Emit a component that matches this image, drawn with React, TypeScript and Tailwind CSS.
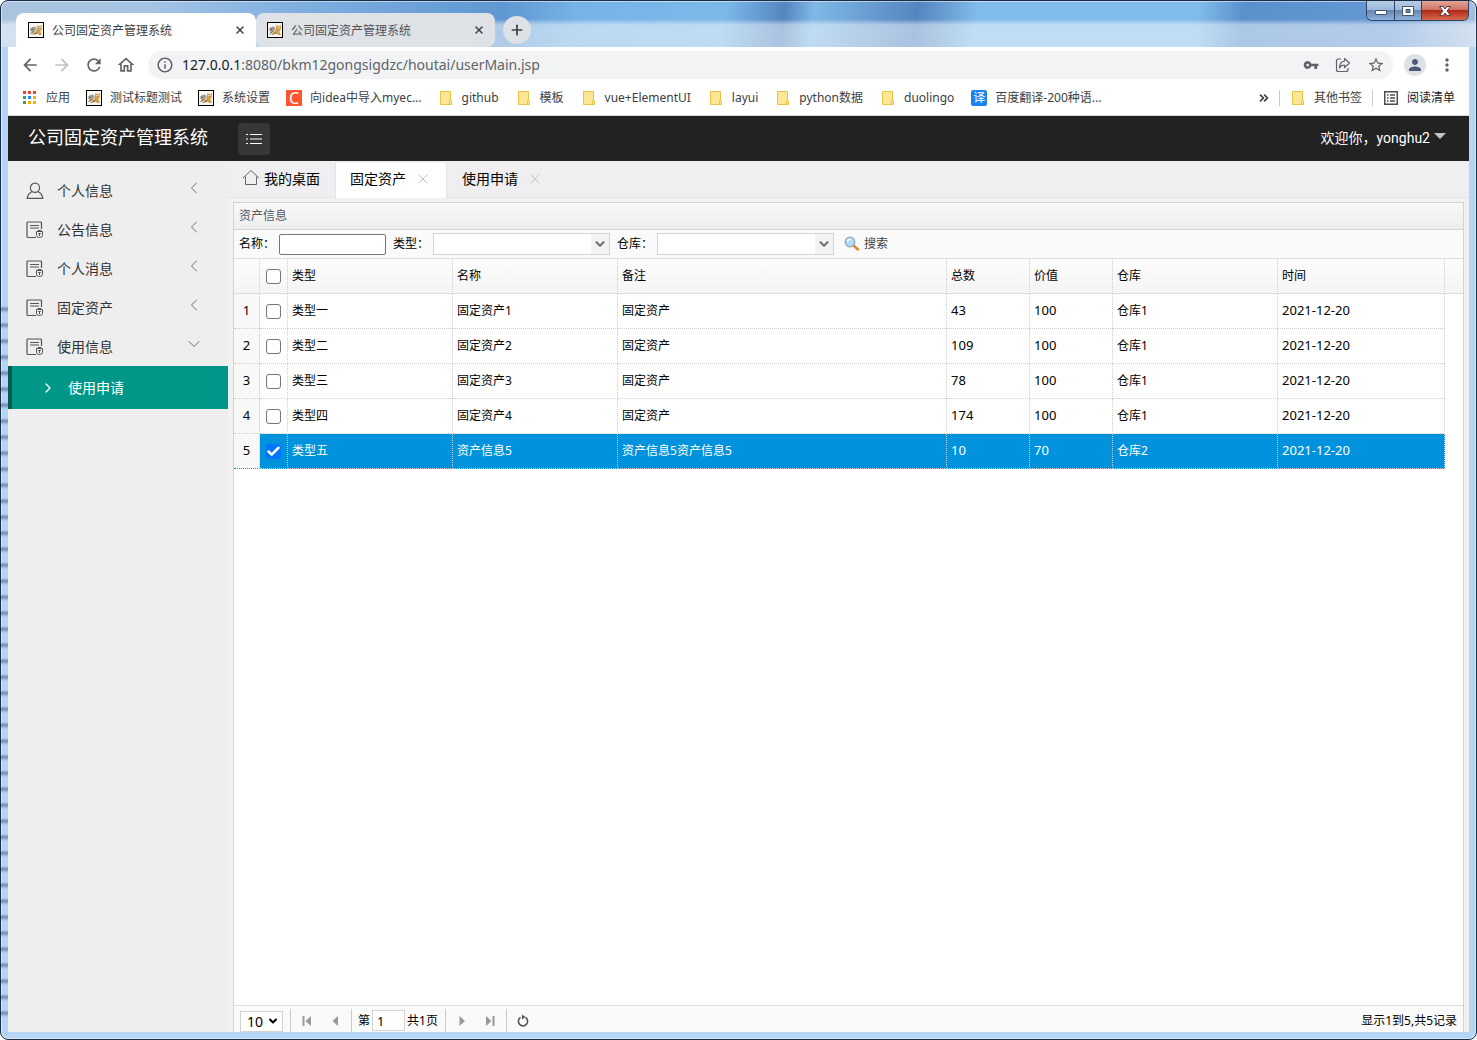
import type { ReactNode } from "react";
import { clsx } from "clsx";
import { Check, ChevronDown, ChevronLeft, ChevronRight, ChevronsRight, Plus, X } from "lucide-react";
import { MdArrowBack, MdArrowForward, MdInfoOutline, MdMoreVert, MdOutlineHome, MdPerson, MdRefresh, MdStarBorder, MdVpnKey } from "react-icons/md";

const TITLE = "公司固定资产管理系统";

const BOOKMARKS = [
  { label: "应用", icon: "apps" },
  { label: "测试标题测试", icon: "cat" },
  { label: "系统设置", icon: "cat" },
  { label: "向idea中导入myec...", icon: "c" },
  { label: "github", icon: "folder" },
  { label: "模板", icon: "folder" },
  { label: "vue+ElementUI", icon: "folder" },
  { label: "layui", icon: "folder" },
  { label: "python数据", icon: "folder" },
  { label: "duolingo", icon: "folder" },
  { label: "百度翻译-200种语...", icon: "fanyi" },
];

const MENU = [
  { label: "个人信息", user: true },
  { label: "公告信息" },
  { label: "个人消息" },
  { label: "固定资产" },
  { label: "使用信息", open: true },
];

const ASSETS = [
  { type: "类型一", name: "固定资产1", remark: "固定资产", total: 43, price: 100, store: "仓库1", date: "2021-12-20" },
  { type: "类型二", name: "固定资产2", remark: "固定资产", total: 109, price: 100, store: "仓库1", date: "2021-12-20" },
  { type: "类型三", name: "固定资产3", remark: "固定资产", total: 78, price: 100, store: "仓库1", date: "2021-12-20" },
  { type: "类型四", name: "固定资产4", remark: "固定资产", total: 174, price: 100, store: "仓库1", date: "2021-12-20" },
  { type: "类型五", name: "资产信息5", remark: "资产信息5资产信息5", total: 10, price: 70, store: "仓库2", date: "2021-12-20", selected: true },
];

function CatIcon() {
  return (
    <svg viewBox="0 0 16 16" className="size-4 shrink-0">
      <rect x=".5" y=".5" width="15" height="15" fill="#f7f6f2" stroke="#000" />
      <path d="M4 13 6 10.500 8.500 8 9 5 9.500 3l1.500 1h1.500L14 3v4l-1.500 2 .5 2 1 2h-3l-1-1.500-3 .5-1 1z" fill="#cfa04e" />
      <path d="M2 6.500 4.500 5 7 4.500 8.500 6.500 6.500 9 3.500 12 2 12.500 3.500 9.500z" fill="#9b9a90" />
      <path d="M2.500 8.500 5 7M4 11l2.500-2M6.500 12l3-1" stroke="#5d5546" strokeWidth=".8" fill="none" />
      <path d="M10.500 5.500h.8M12.400 5.500h.8" stroke="#fff" />
    </svg>
  );
}

function FolderIcon() {
  return (
    <svg viewBox="0 0 16 16" className="size-4 shrink-0">
      <path d="M2.500 1.500h10v9l1 .500v3.500h-11z" fill="#ffe694" stroke="#e8c445" />
      <path d="M11.500 14v-3l1-1" fill="none" stroke="#e8c445" />
    </svg>
  );
}

function BookmarkIcon({ kind }: { kind: string }) {
  if (kind === "cat") return <CatIcon />;
  if (kind === "folder") return <FolderIcon />;
  if (kind === "apps") {
    const colors = ["#ea4335", "#ea4335", "#ea4335", "#34a853", "#1a8cff", "#fbae05", "#34a853", "#fbae05", "#fbae05"];
    return (
      <svg viewBox="0 0 16 16" className="size-4 shrink-0">
        {colors.map((c, i) => (
          <rect key={i} x={1 + (i % 3) * 5} y={1 + Math.floor(i / 3) * 5} width="3" height="3" fill={c} />
        ))}
      </svg>
    );
  }
  if (kind === "c") {
    return <span className="flex size-4 items-center justify-center bg-[#fc5531] text-base leading-4 text-white">C</span>;
  }
  return <span className="flex size-4 items-center justify-center rounded-xs bg-[#1b82f1] text-xs leading-4 text-white">译</span>;
}

function BrowserTab({ active }: { active?: boolean }) {
  return (
    <div
      className={clsx(
        "flex h-[34px] items-center pr-2",
        active ? "w-60 rounded-t-lg bg-white pl-3 text-[#3c4043]" : "w-[239px] rounded-lg bg-[#dee1e6] pl-[11px] text-[#50545a]"
      )}
    >
      <CatIcon />
      <span className="ml-2 flex-1 pt-px text-xs">{TITLE}</span>
      <button aria-label="关闭标签页" className="flex size-4 items-center justify-center">
        <X className="size-3 text-[#3c4043]" strokeWidth={3} />
      </button>
    </div>
  );
}

function WindowButtons() {
  return (
    <div className="flex h-5 overflow-hidden rounded-b-md border border-t-0 border-[#2c4363] text-white">
      <button aria-label="最小化" className="flex w-7 items-center justify-center border-r border-[#2c4363] bg-[linear-gradient(#b9cfe8,#9db8d9_45%,#6787b2_50%,#8cb0dc)]">
        <svg viewBox="0 0 14 12" className="h-3 w-3.5">
          <rect x="1.500" y="5.500" width="11" height="4" rx=".5" fill="#fff" stroke="#44546d" />
        </svg>
      </button>
      <button aria-label="最大化" className="flex w-[27px] items-center justify-center border-r border-[#2c4363] bg-[linear-gradient(#b9cfe8,#9db8d9_45%,#6787b2_50%,#8cb0dc)]">
        <svg viewBox="0 0 14 12" className="h-3 w-3.5">
          <path fillRule="evenodd" d="M1.500 1.500h11v9h-11zM5 4.500h4v3H5z" fill="#fff" stroke="#44546d" />
        </svg>
      </button>
      <button aria-label="关闭" className="flex w-[46px] items-center justify-center bg-[linear-gradient(#e4a597,#cf7465_45%,#b02a17_50%,#d8694e)]">
        <svg viewBox="0 0 14 12" className="h-3 w-3.5">
          <path d="M1.500 1.500H5L7 4l2-2.500h3.500L9 6l3.500 4.500H9L7 8l-2 2.500H1.500L5 6z" fill="#fff" stroke="#5a3a40" />
        </svg>
      </button>
    </div>
  );
}

function ShareIcon() {
  return (
    <svg viewBox="0 0 16 16" className="size-4 text-[#5f6368]" fill="none" stroke="currentColor" strokeWidth="1.200" strokeLinejoin="round">
      <path d="M6 2H3.500A2 2 0 0 0 1.500 4v8.500a2 2 0 0 0 2 2H11a2 2 0 0 0 2-2V11" />
      <path d="M9.500 1.500 14.500 6l-5 4.500V8C7 8 5.500 9 4.500 11 4.500 7 6.500 4.500 9.500 4z" />
    </svg>
  );
}

function BrowserChrome() {
  return (
    <header className="text-[#3c4043]">
      <div className="flex h-[46px] items-end pl-2">
        <BrowserTab active />
        <BrowserTab />
        <button aria-label="新标签页" className="mb-[3px] ml-2 flex size-7 items-center justify-center rounded-full bg-[#dee1e6]">
          <Plus className="size-4" strokeWidth={2.5} />
        </button>
        <div className="ml-auto self-start">
          <WindowButtons />
        </div>
      </div>

      <div className="flex h-9 items-center bg-white px-3 text-[#5f6368]">
        <button aria-label="后退"><MdArrowBack className="size-5" /></button>
        <button aria-label="前进" className="ml-3 text-[#bdc1c6]"><MdArrowForward className="size-5" /></button>
        <button aria-label="刷新" className="ml-3"><MdRefresh className="size-5" /></button>
        <button aria-label="主页" className="ml-3"><MdOutlineHome className="size-5" /></button>
        <div className="ml-3 flex h-7 flex-1 items-center rounded-full bg-[#f1f3f4] px-2">
          <MdInfoOutline className="size-[18px]" />
          <a href="#url" className="ml-2 flex-1 text-sm">
            <span className="text-[#202124]">127.0.0.1</span>:8080/bkm12gongsigdzc/houtai/userMain.jsp
          </a>
          <button aria-label="密码"><MdVpnKey className="size-4" /></button>
          <button aria-label="分享" className="ml-4"><ShareIcon /></button>
          <button aria-label="收藏" className="ml-4"><MdStarBorder className="size-[18px]" /></button>
        </div>
        <button aria-label="用户" className="ml-[11px] flex size-[22px] items-center justify-center rounded-full bg-[#dee1e6]">
          <MdPerson className="size-[18px] text-[#4c5a73]" />
        </button>
        <button aria-label="菜单" className="ml-[11px]"><MdMoreVert className="size-5" /></button>
      </div>

      <nav className="flex h-[33px] items-center border-b border-[#d5d7da] bg-white pr-3.5 pb-[3px] pl-[14px] text-xs whitespace-nowrap">
        {BOOKMARKS.map((b) => (
          <a key={b.label} href="#bookmark" className={clsx("flex items-center gap-2", b.icon === "folder" ? "mr-[17px]" : "mr-4")}>
            <BookmarkIcon kind={b.icon} />
            {b.label}
          </a>
        ))}
        <ChevronsRight className="mr-2 ml-auto size-3.5" strokeWidth={3} />
        <a href="#others" className="flex items-center gap-2 border-l border-[#c8cace] pl-2.5">
          <FolderIcon />
          其他书签
        </a>
        <a href="#reading" className="ml-2.5 flex items-center gap-2 border-l border-[#c8cace] pl-2.5 text-[#202124]">
          <svg viewBox="0 0 16 16" className="size-4" fill="none" stroke="#4a4d51" strokeWidth="1.500">
            <path d="M1.750 1.750h12.500v12.500H1.750zM4 5h1.500M7 5h5M4 8h1.500M7 8h5M4 11h1.500M7 11h5" />
          </svg>
          阅读清单
        </a>
      </nav>
    </header>
  );
}

function MenuIcon({ user }: { user?: boolean }) {
  return (
    <svg viewBox="0 0 18 18" className="size-[18px]" fill="none" stroke="#555" strokeWidth="1.200">
      {user ? (
        <>
          <circle cx="9" cy="5.800" r="4.600" />
          <path d="M6 9.500C3.500 10.800 1.500 13 1.200 16.400h15.600C16.500 13 14.500 10.800 12 9.500" />
        </>
      ) : (
        <>
          <path d="M15.500 8V2a1 1 0 0 0-1-1H2a1 1 0 0 0-1 1v13.500a1 1 0 0 0 1 1h8M4 4.500h9M4 7h9" />
          <path d="M10.500 10.500h6v3.800a2 2 0 0 1-2 2h-2a2 2 0 0 1-2-2zM12 10.500V9.500h3v1M12.200 12.500h2.600M13.500 12.500v2.500" strokeWidth="1" />
        </>
      )}
    </svg>
  );
}

function Sidebar() {
  return (
    <aside className="w-[220px] shrink-0 bg-[#eee] pt-2.5 text-sm text-[#333]">
      {MENU.map((m) => (
        <a key={m.label} href="#menu" className="flex h-[39px] items-center pr-6 pl-[18px]">
          <MenuIcon user={m.user} />
          <span className="ml-[13px] flex-1">{m.label}</span>
          {m.open ? (
            <ChevronDown className="mb-1.5 size-5 text-[#555]" strokeWidth={1} />
          ) : (
            <ChevronLeft className="mb-1.5 size-5 text-[#555]" strokeWidth={1} />
          )}
        </a>
      ))}
      <a href="#apply" className="flex h-[43px] items-center border-l-4 border-[#075b50] bg-[#009688] pl-7 text-white">
        <ChevronRight className="size-4" strokeWidth={2} />
        <span className="ml-3">使用申请</span>
      </a>
    </aside>
  );
}

function PageTabs() {
  return (
    <nav className="flex h-[37px] shrink-0 items-stretch border-b border-[#e4e4e6] bg-[#efeef0] pt-0.5 text-sm text-black">
      <a href="#desk" className="flex w-[107px] items-center pb-0.5 pl-3.5">
        <svg viewBox="0 0 18 18" className="mb-0.5 size-[18px]" fill="none" stroke="#666">
          <path d="M1 9 9 1.500 17 9M3.500 7.500v8h11v-8" />
        </svg>
        <span className="ml-1">我的桌面</span>
      </a>
      <a href="#assets" className="-mb-px flex items-center border-x border-[#e4e4e6] bg-white pr-[15px] pb-[3px] pl-3.5">
        固定资产
        <X className="ml-[9px] size-4 text-[#c2c2c2]" strokeWidth={1.5} />
      </a>
      <a href="#apply-tab" className="flex items-center px-[15px] pb-0.5">
        使用申请
        <X className="ml-[9px] size-4 text-[#c2c2c2]" strokeWidth={1.5} />
      </a>
    </nav>
  );
}

function ComboBox({ label, id }: { label: string; id: string }) {
  return (
    <>
      <label htmlFor={id}>{label}</label>
      <span className="relative ml-1 h-[22px] w-[177px]">
        <select id={id} className="h-full w-full appearance-none border border-[#d3d3d3] bg-white">
          <option value=""></option>
        </select>
        <span className="pointer-events-none absolute top-px right-px flex h-5 w-[18px] items-center justify-center bg-[#f3f3f3]">
          <ChevronDown className="size-3.5 text-[#777]" strokeWidth={4} />
        </span>
      </span>
    </>
  );
}

function Tick({ checked, label }: { checked?: boolean; label: string }) {
  return (
    <span className="relative mx-auto block size-[15px]">
      <input
        type="checkbox"
        aria-label={label}
        defaultChecked={checked}
        className="peer block size-[15px] appearance-none rounded-[3px] border border-[#767676] bg-white checked:border-[#0075ff] checked:bg-[#0075ff]"
      />
      <Check className="pointer-events-none absolute inset-0 hidden size-[15px] text-white peer-checked:block" strokeWidth={4} />
    </span>
  );
}

function Cell({ children, selected, className }: { children: ReactNode; selected?: boolean; className?: string }) {
  return (
    <td
      className={clsx(
        "border-r border-b border-dotted border-[#ccc] px-1",
        selected && "bg-[#0092dc] text-white",
        className
      )}
    >
      {children}
    </td>
  );
}

function AssetTable() {
  return (
    <table className="w-full table-fixed border-separate border-spacing-0 text-left">
      <colgroup>
        <col className="w-[26px]" />
        <col className="w-[28px]" />
        <col className="w-[13.43%]" />
        <col className="w-[13.43%]" />
        <col className="w-[26.77%]" />
        <col className="w-[6.75%]" />
        <col className="w-[6.75%]" />
        <col className="w-[13.43%]" />
        <col className="w-[13.59%]" />
        <col />
      </colgroup>
      <thead>
        <tr className="h-[35px] bg-[linear-gradient(#fdfdfd,#f4f4f4)]">
          <th className="border-r border-b border-r-[#ccc] border-b-[#ddd] [border-right-style:dotted]" />
          <th className="border-r border-b border-r-[#ccc] border-b-[#ddd] [border-right-style:dotted]">
            <Tick label="全选" />
          </th>
          {["类型", "名称", "备注", "总数", "价值", "仓库", "时间"].map((h) => (
            <th key={h} className="border-r border-b border-r-[#ccc] border-b-[#ddd] px-1 font-normal [border-right-style:dotted]">
              {h}
            </th>
          ))}
          <th className="border-b border-[#ddd]" />
        </tr>
      </thead>
      <tbody>
        {ASSETS.map((a, i) => (
          <tr key={a.type} className="h-[35px]">
            <td
              className={clsx(
                "border-r border-b border-dotted border-[#ccc] bg-[#f8f8f8] text-center text-[13px]",
                a.selected && "border-b-[#0092dc]"
              )}
            >
              {i + 1}
            </td>
            <td className={clsx("border-r border-b border-dotted border-[#ccc]", a.selected && "bg-[#0092dc]")}>
              <Tick label={a.name} checked={a.selected} />
            </td>
            <Cell selected={a.selected}>{a.type}</Cell>
            <Cell selected={a.selected}>{a.name}</Cell>
            <Cell selected={a.selected}>{a.remark}</Cell>
            <Cell selected={a.selected} className="text-[13px]">{a.total}</Cell>
            <Cell selected={a.selected} className="text-[13px]">{a.price}</Cell>
            <Cell selected={a.selected}>{a.store}</Cell>
            <Cell selected={a.selected} className="text-[13px]">{a.date}</Cell>
            <td />
          </tr>
        ))}
      </tbody>
    </table>
  );
}

function PageButton({ label, d }: { label: string; d: string }) {
  return (
    <button aria-label={label} className="flex w-7 items-center justify-center">
      <svg viewBox="0 0 12 12" className="size-3" fill="#999">
        <path d={d} />
      </svg>
    </button>
  );
}

function Pagination() {
  return (
    <footer className="flex h-[27px] shrink-0 items-stretch border-t border-[#ddd] bg-[#fafafa] pt-[3px] pl-1.5">
      <div className="relative mt-0.5 h-[21px] w-[43px] self-start">
        <select aria-label="每页条数" className="h-full w-full appearance-none border border-[#d3d3d3] bg-white pl-1.5 text-sm leading-4">
          <option>10</option>
        </select>
        <ChevronDown className="pointer-events-none absolute top-1 right-1 size-3 text-black" strokeWidth={4} />
      </div>
      <div className="ml-[7px] flex border-l border-[#ccc] px-0.5">
        <PageButton label="首页" d="M1.500 1h2v10h-2zM10 1v10L4.500 6z" />
        <PageButton label="上一页" d="M9 1v10L3.500 6z" />
      </div>
      <div className="flex items-center border-x border-[#ccc] pr-[7px] pl-1.5">
        <label htmlFor="page">第</label>
        <input id="page" defaultValue="1" className="mx-0.5 h-[21px] w-[33px] border border-[#d3d3d3] bg-white px-1 text-[13px]" />
        共1页
      </div>
      <div className="flex border-r border-[#ccc] px-0.5">
        <PageButton label="下一页" d="M3.500 1v10L9 6z" />
        <PageButton label="末页" d="M2 1v10L7.500 6zM8.500 1h2v10h-2z" />
      </div>
      <button aria-label="刷新列表" className="ml-[9px]">
        <svg viewBox="0 0 14 14" className="size-3.5" fill="none" stroke="#555" strokeWidth="1.600">
          <path d="M4.500 3.400A4.600 4.600 0 1 0 9.500 3.400" />
          <path d="M6 .5 9.500 3 6 5.500z" fill="#555" stroke="none" />
        </svg>
      </button>
      <p className="ml-auto self-center pr-1.5">显示1到5,共5记录</p>
    </footer>
  );
}

export default function App() {
  return (
    <div className="relative flex h-screen flex-col overflow-hidden rounded-lg border border-[#1c2c44] bg-[#b5d5f5] bg-[linear-gradient(transparent_18px,#ffffff80_24px),linear-gradient(97deg,#a9c4de,#a5c4e4_10%,#7fafe0_20%,#5f97d2_34%,#77b3e6_39%,#7cb8ea_49%,#5585c0_53%,#80b8e6_55%,#5585c0_62%,#80bbea_66%,#80bbea_81%,#5a90cc_84%,#6598d5_94%,#a8c2e0)] bg-[length:100%_46px] bg-no-repeat px-[7px] pb-[7px] font-['Noto_Sans','Noto_Sans_CJK_SC',sans-serif] inset-shadow-[0_0_0_1px_#ffffff80]">
      <div className="absolute top-[300px] bottom-4 left-0 w-[7px] bg-[repeating-linear-gradient(transparent,transparent_5px,#6f90b3_8px,transparent_12px,transparent_16px)]" />
      <BrowserChrome />
      <div className="flex h-[45px] shrink-0 items-center bg-[#222] pr-[23px] pl-5 text-white">
        <h1 className="w-[210px] pb-1 text-lg">{TITLE}</h1>
        <button aria-label="收起菜单" className="flex size-8 items-center justify-center rounded-sm bg-[#373737]">
          <svg viewBox="0 0 18 14" className="h-3.5 w-[18px]" stroke="#fff">
            <path d="M1 2.500h2M5 2.500h12M1 7h2M5 7h12M1 11.500h2M5 11.500h12" />
          </svg>
        </button>
        <button className="ml-auto flex items-center gap-1 pb-0.5 font-[Roboto,'Noto_Sans_CJK_SC',sans-serif] text-sm">
          欢迎你，yonghu2
          <svg viewBox="0 0 12 6" className="mb-1 h-1.5 w-3">
            <path d="M0 0h12L6 6z" fill="#c4c4c4" />
          </svg>
        </button>
      </div>
      <div className="flex min-h-0 flex-1">
        <Sidebar />
        <main className="flex min-w-0 flex-1 flex-col bg-[#f1f1f1]">
          <PageTabs />
          <section className="mx-[5px] mt-1 flex min-h-0 flex-1 flex-col border border-b-0 border-[#d3d3d3] bg-white text-xs text-black">
            <h2 className="h-[27px] shrink-0 border-b border-[#d3d3d3] bg-[linear-gradient(#f8f8f8,#eee)] px-[5px] leading-[26px] text-[#575765]">资产信息</h2>
            <form className="flex h-[29px] shrink-0 items-center border-b border-[#ddd] bg-[#fafafa] px-[5px]">
              <label htmlFor="name">名称：</label>
              <input id="name" className="mr-[7px] ml-1 h-[21px] w-[107px] rounded-xs border border-[#767676] bg-white px-1" />
              <ComboBox id="type" label="类型：" />
              <span className="w-[7px]" />
              <ComboBox id="store" label="仓库：" />
              <button type="button" className="ml-2.5 flex items-center gap-1 text-[#444]">
                <svg viewBox="0 0 16 16" className="size-4">
                  <path d="m9.500 9.500 4.500 4" stroke="#e08a1e" strokeWidth="2.500" strokeLinecap="round" />
                  <circle cx="6" cy="6" r="4.800" fill="#b5dcfb" stroke="#8aa5bd" strokeWidth="1.200" />
                  <path d="M3.500 5.500a3 3 0 0 1 3-2.300" fill="none" stroke="#fff" strokeWidth="1.300" />
                </svg>
                搜索
              </button>
            </form>
            <div className="min-h-0 flex-1 overflow-hidden">
              <AssetTable />
            </div>
            <Pagination />
          </section>
        </main>
      </div>
    </div>
  );
}
